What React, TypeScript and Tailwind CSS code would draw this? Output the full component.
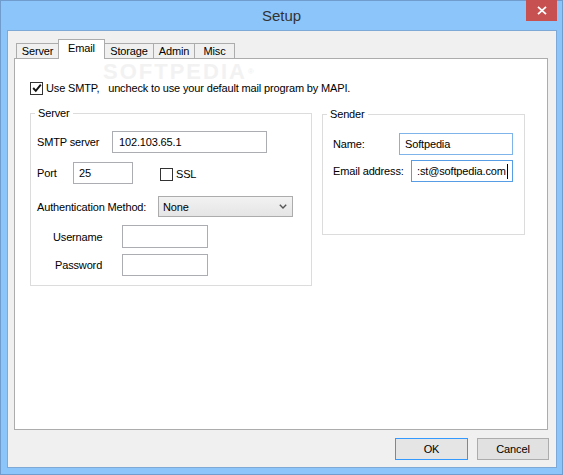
import React from "react";

const ui = "font-['Segoe_UI','Liberation_Sans',Arial,sans-serif] text-[11px] leading-[14px] tracking-[-0.15px] text-black";

const tabs = [
  { label: "Server", w: "w-[43px]" },
  { label: "Email", w: "w-[47px]", active: true },
  { label: "Storage", w: "w-[50px]" },
  { label: "Admin", w: "w-[42px]" },
  { label: "Misc", w: "w-[41px]" },
];

function CheckBox({ checked }: { checked?: boolean }) {
  return (
    <span className="w-[13px] h-[13px] border border-[#333333] bg-white flex items-center justify-center shrink-0">
      {checked && (
        <svg width="10" height="10" viewBox="0 0 10 10">
          <path d="M1.2 5 L3.8 7.8 L8.8 1.6" fill="none" stroke="#111" strokeWidth="1.9" />
        </svg>
      )}
    </span>
  );
}

function TextBox({
  value,
  className,
  border = "border-[#abadb3]",
  caret,
}: {
  value?: string;
  className: string;
  border?: string;
  caret?: boolean;
}) {
  return (
    <div className={`border ${border} bg-white flex items-center pl-[5px] overflow-hidden shrink-0 ${className}`}>
      <span className="whitespace-nowrap">{value}</span>
      {caret && <span className="w-px h-[15px] bg-black ml-px" />}
    </div>
  );
}

export default function App() {
  return (
    <div className={`w-[563px] h-[475px] bg-[#8cc5f9] border border-[#6f9ccd] flex flex-col ${ui}`}>
      {/* title bar */}
      <div className="h-[29px] relative flex items-center justify-center shrink-0">
        <span className="text-[15px] text-[#333333] leading-[20px] mt-[1px] tracking-normal">Setup</span>
        <button className="absolute right-[5px] top-[-1px] w-[31px] h-[21px] bg-[#c75050] flex items-center justify-center">
          <svg width="10" height="9" viewBox="0 0 10 9">
            <path d="M1 0.8 L9 8.2 M9 0.8 L1 8.2" stroke="#fff" strokeWidth="1.8" />
          </svg>
        </button>
      </div>

      {/* client area */}
      <div className="ml-[6px] w-[550px] h-[438px] bg-[#f0f0f0] border border-[#7ea9d6] flex flex-col">
        {/* tab strip */}
        <div className="flex items-end pl-[8px] pt-[8px] h-[27px] shrink-0">
          {tabs.map((t, i) =>
            t.active ? (
              <div
                key={t.label}
                className={`${t.w} h-[20px] -ml-px -mb-px relative z-10 bg-white border border-b-0 border-[#acacac] text-center pt-[1px]`}
              >
                {t.label}
              </div>
            ) : (
              <div
                key={t.label}
                className={`${t.w} h-[15px] ${i === 0 ? "" : "-ml-px"} bg-[#f0f0f0] border border-b-0 border-[#acacac] text-center leading-[13px] pt-[1px]`}
              >
                {t.label}
              </div>
            )
          )}
        </div>

        {/* tab panel */}
        <div className="ml-[6px] w-[534px] h-[372px] bg-white border border-[#acacac] relative pl-[15px] pt-[22px] shrink-0">
          <div className="absolute left-[88px] top-[4px] text-[22px] leading-[17px] font-bold tracking-[2px] text-[#f2f2f2] select-none">
            SOFTPEDIA<span className="text-[8px] align-top ml-[1px]">®</span>
          </div>

          <div className="flex items-center gap-[3px] relative">
            <CheckBox checked />
            <span className="whitespace-pre">Use SMTP,   uncheck to use your default mail program by MAPI.</span>
          </div>

          <div className="flex items-start gap-[10px] mt-[11px] relative">
            {/* Server group */}
            <fieldset className="w-[282px] border border-[#dcdcdc] pb-[9px] pl-[6px]">
              <legend className="ml-[-2px] px-[3px] leading-[15px]">Server</legend>
              <div className="flex items-center h-[22px] mt-[10px]">
                <span className="w-[75px]">SMTP server</span>
                <TextBox value="102.103.65.1" className="w-[155px] h-[22px] pl-[6px]" />
              </div>
              <div className="flex items-center h-[22px] mt-[9px]">
                <span className="w-[36px]">Port</span>
                <TextBox value="25" className="w-[60px] h-[22px]" />
                <span className="ml-[27px] mt-[2px]">
                  <CheckBox />
                </span>
                <span className="ml-[3px] mt-[2px]">SSL</span>
              </div>
              <div className="flex items-center h-[21px] mt-[12px]">
                <span className="w-[121px]">Authentication Method:</span>
                <div className="w-[135px] h-[21px] border border-[#acacac] bg-gradient-to-b from-[#f2f2f2] to-[#e5e5e5] flex items-center pl-[4px] pr-[5px] justify-between">
                  <span>None</span>
                  <svg width="8" height="5" viewBox="0 0 8 5">
                    <path d="M0.8 0.8 L4 4 L7.2 0.8" fill="none" stroke="#555" strokeWidth="1.4" />
                  </svg>
                </div>
              </div>
              <div className="flex items-center h-[23px] mt-[8px] pl-[16px]">
                <span className="w-[69px]">Username</span>
                <TextBox className="w-[86px] h-[23px]" />
              </div>
              <div className="flex items-center h-[22px] mt-[6px] pl-[18px]">
                <span className="w-[67px]">Password</span>
                <TextBox className="w-[86px] h-[22px]" />
              </div>
            </fieldset>

            {/* Sender group */}
            <fieldset className="w-[203px] h-[128px] border border-[#dcdcdc] pl-[10px] mt-[1px]">
              <legend className="ml-[-6px] px-[3px] leading-[15px]">Sender</legend>
              <div className="flex items-center h-[22px] mt-[11px]">
                <span className="w-[66px]">Name:</span>
                <TextBox value="Softpedia" border="border-[#7eb4ea]" className="w-[114px] h-[22px]" />
              </div>
              <div className="flex items-center h-[22px] mt-[5px]">
                <span className="w-[78px]">Email address:</span>
                <TextBox
                  value=":st@softpedia.com"
                  border="border-[#569de5]"
                  caret
                  className="w-[102px] h-[22px]"
                />
              </div>
            </fieldset>
          </div>
        </div>

        {/* buttons */}
        <div className="flex justify-end gap-[9px] mt-[8px] pr-[7px]">
          <button className="w-[73px] h-[22px] border border-[#3399ff] bg-[#e5e5e5]">OK</button>
          <button className="w-[72px] h-[22px] border border-[#acacac] bg-[#e1e1e1]">Cancel</button>
        </div>
      </div>
    </div>
  );
}
